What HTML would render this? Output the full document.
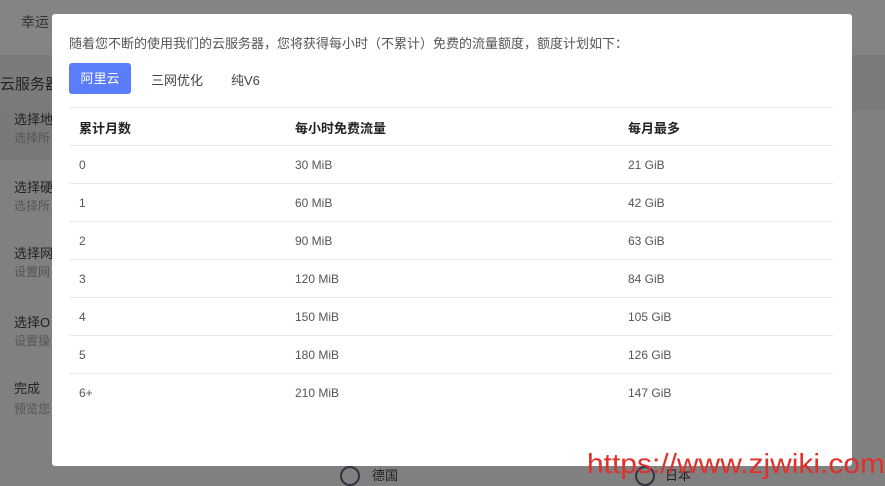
<!DOCTYPE html>
<html><head><meta charset="utf-8"><style>
*{margin:0;padding:0;box-sizing:border-box}
body{width:885px;height:481px;overflow:hidden;background:#808080;font-family:"Liberation Sans","Noto Sans CJK SC",sans-serif;position:relative}
.abs{position:absolute;white-space:nowrap}
.modal{position:absolute;left:52px;top:14px;width:800px;height:452px;background:#fff;border-radius:3px}
.row{position:absolute;left:17px;width:764px;height:38px;border-top:1px solid #ebebeb;font-size:12px;color:#555}
.row span{position:absolute;top:12px}
.h{font-weight:bold;color:#222;font-size:13px;top:10px!important}
</style></head><body>
<div class="abs" style="left:0;top:0;width:885px;height:55px;background:#848484"></div>
<div class="abs" style="left:0;top:55px;width:885px;height:55px;background:#7b7b7b"></div>
<div class="abs" style="left:0;top:110px;width:52px;height:50px;background:#797979"></div>
<div class="abs" style="left:21px;top:12px;font-size:14px;color:#333">幸运</div>
<div class="abs" style="left:0;top:73px;font-size:15px;color:#222">云服务器</div>
<div class="abs" style="left:14px;top:109px;font-size:13px;color:#222">选择地</div>
<div class="abs" style="left:14px;top:129px;font-size:12px;color:#555">选择所</div>
<div class="abs" style="left:14px;top:177px;font-size:13px;color:#222">选择硬</div>
<div class="abs" style="left:14px;top:197px;font-size:12px;color:#555">选择所</div>
<div class="abs" style="left:14px;top:243px;font-size:13px;color:#222">选择网</div>
<div class="abs" style="left:14px;top:263px;font-size:12px;color:#555">设置网</div>
<div class="abs" style="left:14px;top:312px;font-size:13px;color:#222">选择O</div>
<div class="abs" style="left:14px;top:332px;font-size:12px;color:#555">设置操</div>
<div class="abs" style="left:14px;top:378px;font-size:13px;color:#222">完成</div>
<div class="abs" style="left:14px;top:400px;font-size:12px;color:#555">预览您</div>
<div class="abs" style="left:340px;top:466px;width:20px;height:20px;border:2px solid #334;border-radius:50%"></div>
<div class="abs" style="left:372px;top:465px;font-size:13px;color:#222">德国</div>
<div class="abs" style="left:635px;top:466px;width:20px;height:20px;border:2px solid #334;border-radius:50%"></div>
<div class="abs" style="left:665px;top:465px;font-size:13px;color:#222">日本</div>
<div class="modal">
<div class="abs" style="left:17px;top:19px;font-size:13px;color:#555">随着您不断的使用我们的云服务器，您将获得每小时（不累计）免费的流量额度，额度计划如下：</div>
<div class="abs" style="left:17px;top:49px;width:62px;height:31px;background:#5b7cfb;border-radius:3px;color:#fff;font-size:13px;text-align:center;line-height:31px">阿里云</div>
<div class="abs" style="left:99px;top:56px;font-size:13px;color:#444">三网优化</div>
<div class="abs" style="left:179px;top:56px;font-size:13px;color:#444">纯V6</div>
<div class="row" style="top:93px"><span class="h" style="left:10px">累计月数</span><span class="h" style="left:226px">每小时免费流量</span><span class="h" style="left:559px">每月最多</span></div>
<div class="row" style="top:131px"><span style="left:10px">0</span><span style="left:226px">30 MiB</span><span style="left:559px">21 GiB</span></div>
<div class="row" style="top:169px"><span style="left:10px">1</span><span style="left:226px">60 MiB</span><span style="left:559px">42 GiB</span></div>
<div class="row" style="top:207px"><span style="left:10px">2</span><span style="left:226px">90 MiB</span><span style="left:559px">63 GiB</span></div>
<div class="row" style="top:245px"><span style="left:10px">3</span><span style="left:226px">120 MiB</span><span style="left:559px">84 GiB</span></div>
<div class="row" style="top:283px"><span style="left:10px">4</span><span style="left:226px">150 MiB</span><span style="left:559px">105 GiB</span></div>
<div class="row" style="top:321px"><span style="left:10px">5</span><span style="left:226px">180 MiB</span><span style="left:559px">126 GiB</span></div>
<div class="row" style="top:359px"><span style="left:10px">6+</span><span style="left:226px">210 MiB</span><span style="left:559px">147 GiB</span></div>
</div>
<div class="abs" style="left:587px;top:448px;font-size:28px;color:#e0302c;font-family:'Liberation Sans',sans-serif;transform:scaleX(1.07);transform-origin:left">https://www.zjwiki.com</div>
</body></html>
